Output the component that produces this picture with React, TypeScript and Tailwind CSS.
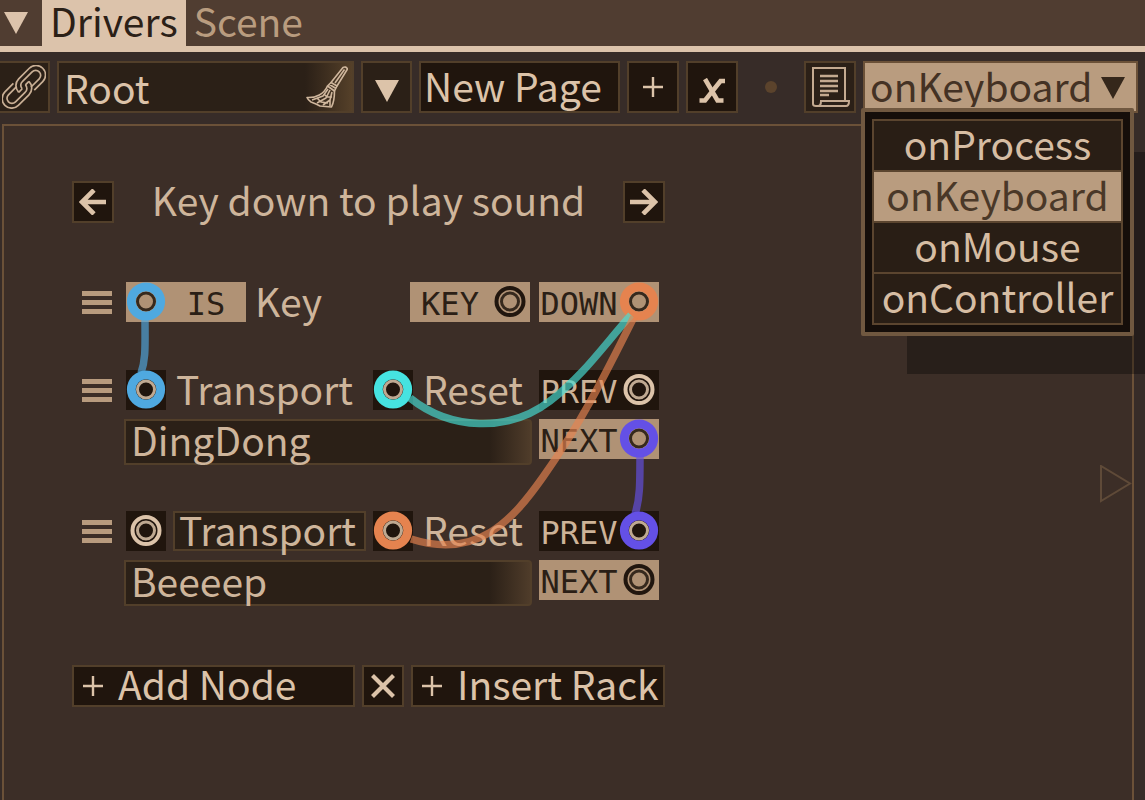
import { useState } from 'react';
import type { ReactNode } from 'react';
import clsx from 'clsx';

const EVENTS = ['onProcess', 'onKeyboard', 'onMouse', 'onController'];

const WIRES = [
  { color: '#4fa9e0', d: 'M73 137 C73 165 74 178 69 192' },
  { color: '#46dfd6', d: 'M338 217 C378 249 436 252 478 220 C512 194 532 164 559 134' },
  { color: '#e5834f', d: 'M339 358 C405 379 440 340 471 296 C508 244 532 196 562 136' },
  { color: '#6450e6', d: 'M568 273 C568 303 568 318 563 333' },
];

type Tone = 'dark' | 'tan';

function Port({ tone = 'dark', link, label }: { tone?: Tone; link?: string; label: string }) {
  const ink = tone === 'tan' ? '#21160e' : '#dcc3a9';
  return (
    <button
      type="button"
      aria-label={label}
      className={clsx('size-10 shrink-0', tone === 'tan' ? 'bg-[#b09275]' : 'bg-[#20150d]')}
    >
      <svg viewBox="0 0 40 40" className="size-10" fill="none">
        <circle cx="20" cy="19.5" r="13.5" stroke={ink} strokeWidth="4" />
        <circle cx="20" cy="19.5" r="8.5" stroke={ink} strokeWidth="3" strokeOpacity="0.85" />
        {link && <circle cx="20" cy="19.5" r="14.7" stroke={link} strokeWidth="8.8" />}
      </svg>
    </button>
  );
}

function Tag({
  tone,
  link,
  portFirst,
  children,
}: {
  tone: Tone;
  link?: string;
  portFirst?: boolean;
  children: string;
}) {
  return (
    <div
      className={clsx(
        'flex h-10 w-[120px] shrink-0 items-center font-["DejaVu_Sans_Mono",monospace] text-[32px] leading-10',
        portFirst && 'flex-row-reverse',
        tone === 'tan' ? 'bg-[#b09275] text-[#2b1f16]' : 'bg-[#20150d] text-[#cdb398]',
      )}
    >
      <span className="flex-1 pt-1 text-center">{children}</span>
      <Port tone={tone} link={link} label={children} />
    </div>
  );
}

function Grip() {
  return (
    <button type="button" aria-label="Move node" className="flex h-10 w-[30px] shrink-0 flex-col justify-center gap-1">
      <span className="h-[5px] bg-[#b89b7e]" />
      <span className="h-[5px] bg-[#b89b7e]" />
      <span className="h-[5px] bg-[#b89b7e]" />
    </button>
  );
}

function Box({ label, className, children }: { label?: string; className?: string; children: ReactNode }) {
  return (
    <button
      type="button"
      aria-label={label}
      className={clsx(
        'flex shrink-0 items-center border-2 border-[#523f2a] whitespace-nowrap text-[#dcc3a9]',
        label && 'justify-center',
        className,
      )}
    >
      {children}
    </button>
  );
}

function Plus() {
  return (
    <svg viewBox="0 0 20 20" className="size-5 shrink-0" fill="none" stroke="currentColor" strokeWidth="2.4">
      <path d="M10 0V20M0 10H20" />
    </svg>
  );
}

function Down({ className }: { className?: string }) {
  return (
    <svg viewBox="0 0 24 22" className={clsx('h-[22px] w-6 shrink-0', className)} fill="currentColor">
      <path d="M0 0H24L12 22Z" />
    </svg>
  );
}

function LinkIcon() {
  return (
    <svg viewBox="0 0 44 44" className="size-11 shrink-0" fill="none" stroke="#c9af95" strokeWidth="1.7">
      <g transform="rotate(-45 22 22)">
        <path d="M17 12H5A9.500 9.500 0 0 0 5 31H20A9.500 9.500 0 0 0 29.500 21.500" />
        <path d="M17 16.500H5.500A5 5 0 0 0 5.500 26.500H19A5 5 0 0 0 24.500 21.500" />
        <path d="M27 31.500H39A9.500 9.500 0 0 0 39 12.500H24A9.500 9.500 0 0 0 14.500 22" />
        <path d="M27 27H38.500A5 5 0 0 0 38.500 17H25A5 5 0 0 0 19.500 22" />
        <path d="M24.500 21.500H29.500M14.500 22H19.500" />
      </g>
    </svg>
  );
}

function Broom() {
  return (
    <svg
      viewBox="0 0 42 42"
      className="size-[42px] shrink-0"
      fill="none"
      stroke="#d0b79d"
      strokeWidth="1.6"
      strokeLinejoin="round"
    >
      <path d="M37 1.500Q40 0 41.500 3L31 20L25 16.500Z" />
      <path d="M38.500 3.500L29 17" />
      <path d="M25 16.500L21.500 20L28.500 25L31 20M23.500 18.500L30 22.500" />
      <path d="M21.500 20C18 28 10 32 1 31.500Q2 34 5 36L10 38L14 40L25.500 41C28 36 28.500 30 28.500 25" />
      <path d="M22 23L17 30L6 34M24 24L20 32L11 37M26 26L24 34L17 39M18 28L21 31L26 31M11 32L15 36L22 37M24 34L24 40" />
    </svg>
  );
}

function Scroll() {
  return (
    <svg viewBox="0 0 40 42" className="h-[42px] w-10" fill="none" stroke="#c4aa90" strokeWidth="2">
      <path d="M3 38V2H35V34" />
      <path d="M3 38Q3 40 6 40H36Q39 40 39 35H11Q11 40 8 40" />
      <path d="M10 10H28M10 15H28M10 20H28M10 25H28M10 29H19" strokeWidth="2.6" />
    </svg>
  );
}

function Toolbar() {
  const [event, setEvent] = useState('onKeyboard');

  return (
    <div className="flex gap-[7px] pt-[9px] pr-[7px] pb-[11px]">
      <Box label="Link" className="h-[52px] w-[50px] border-l-0 bg-[#2b2017]">
        <LinkIcon />
      </Box>
      <div className="flex h-[52px] w-[297px] items-center border-2 border-[#523f2a] bg-linear-to-r from-[#2b2017] from-84% to-[#554029] pr-1 pl-[5px]">
        <input
          aria-label="Page name"
          defaultValue="Root"
          className="h-14 min-w-0 flex-1 bg-transparent text-[#dcc3a9] outline-none"
        />
        <Broom />
      </div>
      <Box label="Pages" className="h-[52px] w-[51px] bg-[#2b2017]">
        <Down className="mt-2" />
      </Box>
      <Box className="h-[52px] w-[201px] bg-[#20150d] pb-1 pl-[3px] leading-11">New Page</Box>
      <Box label="Add" className="size-[52px] bg-[#20150d]">
        <Plus />
      </Box>
      <Box label="Delete" className="size-[52px] bg-[#20150d]">
        <svg viewBox="0 0 26 26" className="mt-2 size-[26px]" fill="none" stroke="currentColor" strokeWidth="4.6">
          <path d="M6 1L18.500 22.500H24.500" />
          <path d="M26 3H21.500L6 22.500H0.500" />
        </svg>
      </Box>
      <div className="flex flex-1 items-center justify-center">
        <span className="size-3 rounded-full bg-[#5b432c]" />
      </div>
      <Box label="Script" className="size-[52px] bg-[#2b2017]">
        <Scroll />
      </Box>
      <div className="relative h-[52px] w-[275px] shrink-0">
        <select
          aria-label="Event"
          value={event}
          onChange={(e) => setEvent(e.target.value)}
          className="block h-[52px] w-full appearance-none border-2 border-[#6b5138] bg-[#b99c7f] pb-1 pl-[5px] leading-11 text-[#443224] outline-none"
        >
          {EVENTS.map((name) => (
            <option key={name}>{name}</option>
          ))}
        </select>
        <Down className="pointer-events-none absolute top-4 right-[13px] text-[#35271b]" />

        <div className="absolute top-[47px] right-1 -left-0.5 z-10 rounded-xs border-4 border-[#705840] bg-[#150e0a] px-[7px] py-[7px] shadow-[43px_41px_0_-3px_rgba(0,0,0,0.32)]">
          <ul role="listbox" aria-label="Events" className="divide-y-2 divide-[#5b452f] border-2 border-[#5b452f]">
            {EVENTS.map((name) => (
              <li key={name}>
                <button
                  type="button"
                  role="option"
                  aria-selected={name === event}
                  onClick={() => setEvent(name)}
                  className={clsx(
                    'block h-[49px] w-full pb-1.5 text-center leading-10',
                    name === event ? 'bg-[#b99c7f] text-[#4a3828]' : 'bg-[#291e15] text-[#d6bda3]',
                  )}
                >
                  {name}
                </button>
              </li>
            ))}
          </ul>
        </div>
      </div>
    </div>
  );
}

function TransportNode({
  name,
  boxed,
  inLink,
  resetLink,
  prevLink,
  nextLink,
}: {
  name: string;
  boxed?: boolean;
  inLink?: string;
  resetLink: string;
  prevLink?: string;
  nextLink?: string;
}) {
  return (
    <div className="flex gap-[14px] pl-[10px]">
      <Grip />
      <div className="flex flex-col gap-[9px]">
        <div className="flex gap-[9px]">
          <div className="flex w-[404px] gap-[7px]">
            <Port label="Transport in" link={inLink} />
            <span
              className={clsx(
                'h-10 w-[193px] shrink-0',
                boxed ? 'border-2 border-[#523f2a] bg-[#2b2017] pl-1 leading-8' : 'pl-[3px] leading-9',
              )}
            >
              Transport
            </span>
            <Port label="Reset in" link={resetLink} />
            <span className="pl-[3px] leading-9">Reset</span>
          </div>
          <Tag tone="dark" link={prevLink}>
            PREV
          </Tag>
        </div>
        <div className="flex gap-[7px]">
          <div className="-ml-0.5 flex h-[46px] w-[408px] items-center rounded-r-sm border-2 border-[#523f2a] bg-linear-to-r from-[#2b2017] from-90% to-[#4f3c2a] pb-1.5 pl-[5px]">
            <input
              aria-label="Track"
              defaultValue={name}
              className="h-14 min-w-0 flex-1 bg-transparent outline-none"
            />
          </div>
          <Tag tone="tan" link={nextLink}>
            NEXT
          </Tag>
        </div>
      </div>
    </div>
  );
}

function Rack() {
  return (
    <section className="relative mt-[55px] ml-[68px] w-[593px]">
      <div className="flex items-center justify-between">
        <Box label="Previous rack" className="size-[42px] bg-[#20150d]">
          <svg viewBox="0 0 28 26" className="h-[26px] w-7" fill="none" stroke="currentColor" strokeWidth="4.6">
            <path d="M27 13H3M15 1L3 13L15 25" />
          </svg>
        </Box>
        <h2 className="pb-1.5 leading-9">Key down to play sound</h2>
        <Box label="Next rack" className="size-[42px] bg-[#20150d]">
          <svg viewBox="0 0 28 26" className="h-[26px] w-7" fill="none" stroke="currentColor" strokeWidth="4.6">
            <path d="M0 13H25M13 1L25 13L13 25" />
          </svg>
        </Box>
      </div>

      <div className="mt-[59px] flex gap-[14px] pl-[10px]">
        <Grip />
        <div className="flex gap-[9px]">
          <div className="flex w-[404px] gap-[9px]">
            <Tag tone="tan" link="#4fa9e0" portFirst>
              IS
            </Tag>
            <span className="flex-1 leading-9">Key</span>
            <Tag tone="tan">KEY</Tag>
          </div>
          <Tag tone="tan" link="#e5834f">
            DOWN
          </Tag>
        </div>
      </div>

      <div className="mt-12 flex flex-col gap-[46px]">
        <TransportNode name="DingDong" inLink="#4fa9e0" resetLink="#46e3e0" nextLink="#6450e6" />
        <TransportNode name="Beeeep" boxed resetLink="#e5834f" prevLink="#6450e6" />
      </div>

      <div className="mt-[59px] flex gap-[7px]">
        <Box className="h-[42px] w-[283px] gap-[15px] bg-[#20150d] pl-[9px] leading-9">
          <Plus />
          <span className="pb-1.5">Add Node</span>
        </Box>
        <Box label="Remove" className="size-[42px] bg-[#20150d]">
          <svg viewBox="0 0 24 24" className="size-6" fill="none" stroke="currentColor" strokeWidth="4.2">
            <path d="M1.500 1.500L22.500 22.500M22.500 1.500L1.500 22.500" />
          </svg>
        </Box>
        <Box className="h-[42px] flex-1 gap-[15px] bg-[#20150d] pl-[9px] leading-9">
          <Plus />
          <span className="pb-1.5">Insert Rack</span>
        </Box>
      </div>

      {/* patch cables */}
      <svg className="pointer-events-none absolute inset-0 size-full" fill="none" strokeWidth="7.5" strokeOpacity="0.66">
        {WIRES.map((wire) => (
          <path key={wire.d} d={wire.d} stroke={wire.color} />
        ))}
      </svg>
    </section>
  );
}

export default function App() {
  return (
    <div className='flex min-h-screen flex-col overflow-hidden bg-[#372c28] font-["Noto_Sans_CJK_SC","Noto_Sans",sans-serif] text-[39px] text-[#ceb59b]'>
      <nav className="flex h-[52px] items-start border-b-6 border-[#dcc3ab] bg-[#503d31]">
        <button type="button" aria-label="Menu" className="flex h-[46px] w-[42px] items-center pl-1 text-[#dcc3ab]">
          <Down />
        </button>
        <button type="button" className="h-[46px] bg-[#dcc3ab] px-2 pb-1.5 leading-10 text-[#2b2017]">
          Drivers
        </button>
        <button type="button" className="h-[46px] px-2 pb-1.5 leading-10 text-[#b99c7f]">
          Scene
        </button>
      </nav>
      <Toolbar />
      <main className="mr-[11px] ml-0.5 flex flex-1 items-start justify-between border-2 border-b-0 border-[#6b5138] bg-[#3c2e27]">
        <Rack />
        <svg viewBox="0 0 32 38" className="mt-[339px] h-[38px] w-8" fill="none" stroke="#5f4a38" strokeWidth="2">
          <path d="M1 1V36L30 18.500Z" />
        </svg>
      </main>
    </div>
  );
}
